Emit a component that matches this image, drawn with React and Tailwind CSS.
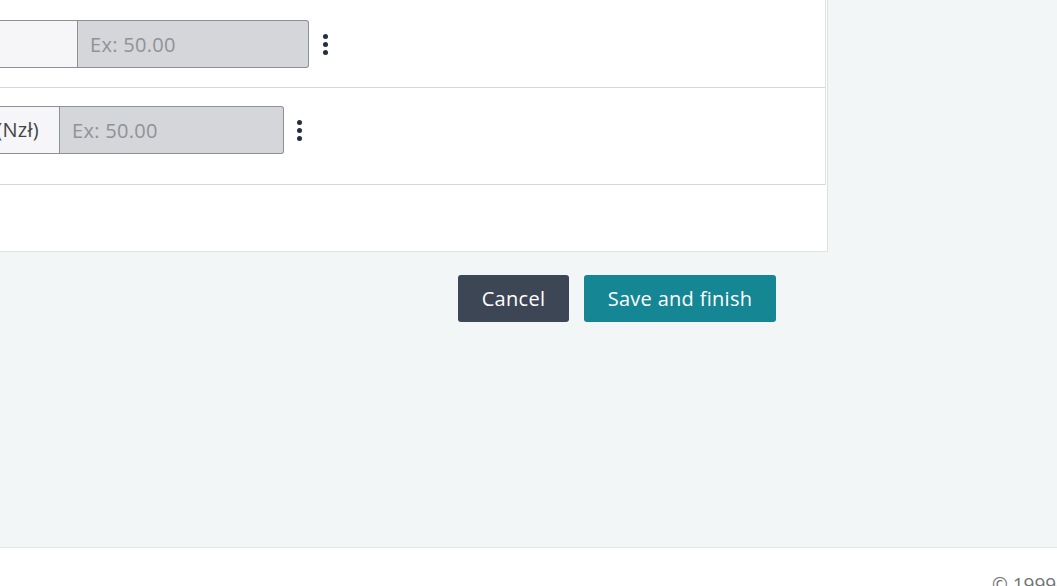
const Kebab = () => (
  <button type="button" className="flex h-6 w-4 flex-col items-center justify-center gap-[3px]">
    <span className="h-[5px] w-[5px] rounded-full bg-[#232f3e]" />
    <span className="h-[5px] w-[5px] rounded-full bg-[#232f3e]" />
    <span className="h-[5px] w-[5px] rounded-full bg-[#232f3e]" />
  </button>
);

const PriceRow = ({ prefix, prefixW, inputW, gap, pt, pb }) => (
  <div className={`flex items-center border-b border-[#d5d9d9] ${pt} ${pb}`}>
    <div
      className={`flex h-12 shrink-0 items-center justify-end border border-l-0 border-[#8d9096] bg-[#f6f6f9] pr-[20px] text-[20px] tracking-[0.3px] text-[#444] ${prefixW}`}
    >
      <span className="whitespace-nowrap">{prefix}</span>
    </div>
    <input
      type="text"
      placeholder="Ex: 50.00"
      className={`h-12 rounded-r-[3px] border border-l-0 border-[#8d9096] bg-[#d5d6d9] px-3 text-[20px] tracking-[0.3px] text-[#333] placeholder-[#8f9296] outline-none ${inputW}`}
    />
    <div className={gap}>
      <Kebab />
    </div>
  </div>
);

const App = () => {
  return (
    <div className="flex h-[586px] w-full flex-col overflow-hidden bg-[#f3f6f7]" style={{ fontFamily: '"Open Sans", "Noto Sans", sans-serif' }}>
      <main className="h-[547px] shrink-0">
        <div className="w-[828px] border-r border-b border-[#dfe2e2] bg-white">
          <div className="border-r border-[#dfe2e2] mr-[1px]">
            <PriceRow prefix="" prefixW="w-[78px]" inputW="w-[231px]" gap="ml-[8px]" pt="pt-[20px]" pb="pb-[19px]" />
            <PriceRow prefix="(Nzł)" prefixW="w-[60px]" inputW="w-[224px]" gap="ml-[7px]" pt="pt-[18px]" pb="pb-[30px]" />
          </div>
          <div className="h-[66px]" />
        </div>
        <div className="flex w-[776px] justify-end gap-[15px] pt-[23px]">
          <button type="button" className="h-[47px] w-[111px] rounded-[3px] bg-[#3d4654] text-[20px] tracking-[0.3px] text-white">
            Cancel
          </button>
          <button type="button" className="h-[47px] w-[192px] rounded-[3px] bg-[#148694] text-[20px] tracking-[0.3px] text-white">
            Save and finish
          </button>
        </div>
      </main>
      <footer className="flex-1 border-t border-[#e3e6e6] bg-white pl-[992px] pt-[22px] text-[19px] text-[#6f7373] whitespace-nowrap">
        © 1999-2024, Amazon.com, Inc. or its affiliates
      </footer>
    </div>
  );
};

export default App;
